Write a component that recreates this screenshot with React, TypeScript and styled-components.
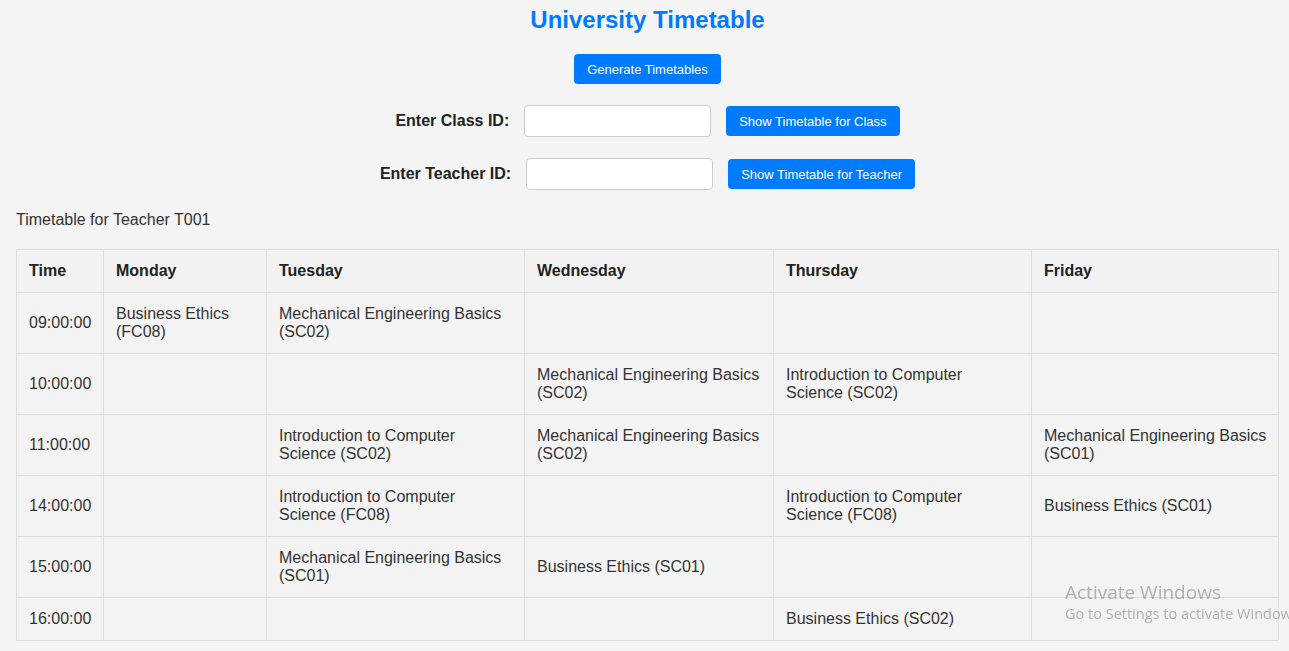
import React from 'react';
import styled, { createGlobalStyle } from 'styled-components';

type Slot = { time: string, cells: string[] };

const days = ['Monday', 'Tuesday', 'Wednesday', 'Thursday', 'Friday'];
const widths = [87, 163, 258, 249, 258, 247];

const slots: Slot[] = [
    { time: '09:00:00', cells: ['Business Ethics (FC08)', 'Mechanical Engineering Basics (SC02)', '', '', ''] },
    { time: '10:00:00', cells: ['', '', 'Mechanical Engineering Basics (SC02)', 'Introduction to Computer Science (SC02)', ''] },
    { time: '11:00:00', cells: ['', 'Introduction to Computer Science (SC02)', 'Mechanical Engineering Basics (SC02)', '', 'Mechanical Engineering Basics (SC01)'] },
    { time: '14:00:00', cells: ['', 'Introduction to Computer Science (FC08)', '', 'Introduction to Computer Science (FC08)', 'Business Ethics (SC01)'] },
    { time: '15:00:00', cells: ['', 'Mechanical Engineering Basics (SC01)', 'Business Ethics (SC01)', '', ''] },
    { time: '16:00:00', cells: ['', '', '', 'Business Ethics (SC02)', ''] },
];

const App = () => {
    return (
        <>
            <GlobalStyle />
            <Page>
                <Title>University Timetable</Title>
                <Controls>
                    <Button>Generate Timetables</Button>
                    <FormRow>
                        <Label>Enter Class ID:</Label>
                        <Input type="text" />
                        <Button>Show Timetable for Class</Button>
                    </FormRow>
                    <FormRow>
                        <Label>Enter Teacher ID:</Label>
                        <Input type="text" />
                        <Button>Show Timetable for Teacher</Button>
                    </FormRow>
                </Controls>
                <Caption>Timetable for Teacher T001</Caption>
                <Table>
                    <colgroup>
                        {widths.map((w, i) => <col key={i} style={{ width: w }} />)}
                    </colgroup>
                    <thead>
                        <tr>
                            <Th>Time</Th>
                            {days.map(d => <Th key={d}>{d}</Th>)}
                        </tr>
                    </thead>
                    <tbody>
                        {slots.map(s => (
                            <tr key={s.time}>
                                <Td>{s.time}</Td>
                                {s.cells.map((c, i) => <Td key={i}>{c}</Td>)}
                            </tr>
                        ))}
                    </tbody>
                </Table>
            </Page>
            <Watermark>
                <WatermarkTitle>Activate Windows</WatermarkTitle>
                <WatermarkText>Go to Settings to activate Windows.</WatermarkText>
            </Watermark>
        </>
    )
}

export default App;

const GlobalStyle = createGlobalStyle`
    html, body {
        margin: 0;
        padding: 0;
        background-color: #f4f4f4;
        overflow: hidden;
    }
    body {
        font-family: "Liberation Sans", Arial, sans-serif;
        color: #333;
    }
`;

const Page = styled.div`
    padding: 0 10px 0 16px;
`;

const Title = styled.h1`
    margin: 0;
    padding-top: 6px;
    height: 42px;
    text-align: center;
    color: #007bff;
    font-size: 24px;
    font-weight: bold;
`;

const Controls = styled.div`
    display: flex;
    flex-direction: column;
    align-items: center;
    padding-top: 6px;
    gap: 21px;
`;

const FormRow = styled.div`
    display: flex;
    align-items: center;
    gap: 15px;
`;

const Label = styled.label`
    font-size: 16px;
    font-weight: bold;
    color: #222;
`;

const Input = styled.input`
    box-sizing: border-box;
    width: 187px;
    height: 32px;
    padding: 6px 8px;
    border: 1px solid #ccc;
    border-radius: 4px;
    background: #fff;
    font-size: 14px;
`;

const Button = styled.button`
    box-sizing: border-box;
    height: 30px;
    padding: 0 13px;
    border: none;
    border-radius: 4px;
    background-color: #007bff;
    color: #fff;
    font-family: "Liberation Sans", Arial, sans-serif;
    font-size: 13px;
    cursor: pointer;
`;

const Caption = styled.p`
    margin: 21px 0 20px;
    font-size: 16px;
    color: #333;
`;

const Table = styled.table`
    width: 100%;
    border-collapse: collapse;
    table-layout: fixed;
    font-size: 16px;
`;

const Th = styled.th`
    border: 1px solid #ddd;
    padding: 12px;
    text-align: left;
    font-weight: bold;
    color: #222;
    background-color: #f2f2f2;
    line-height: 18px;
`;

const Td = styled.td`
    border: 1px solid #ddd;
    padding: 12px 8px 12px 12px;
    text-align: left;
    color: #333;
    line-height: 18px;
    background-color: #f3f3f3;
`;

const Watermark = styled.div`
    position: fixed;
    left: 1065px;
    top: 580px;
    white-space: nowrap;
    color: rgba(120, 120, 120, 0.55);
    font-family: "Open Sans", "Noto Sans", sans-serif;
    pointer-events: none;
`;

const WatermarkTitle = styled.div`
    font-size: 19px;
    line-height: 24px;
`;

const WatermarkText = styled.div`
    font-size: 14.5px;
    line-height: 20px;
`;
